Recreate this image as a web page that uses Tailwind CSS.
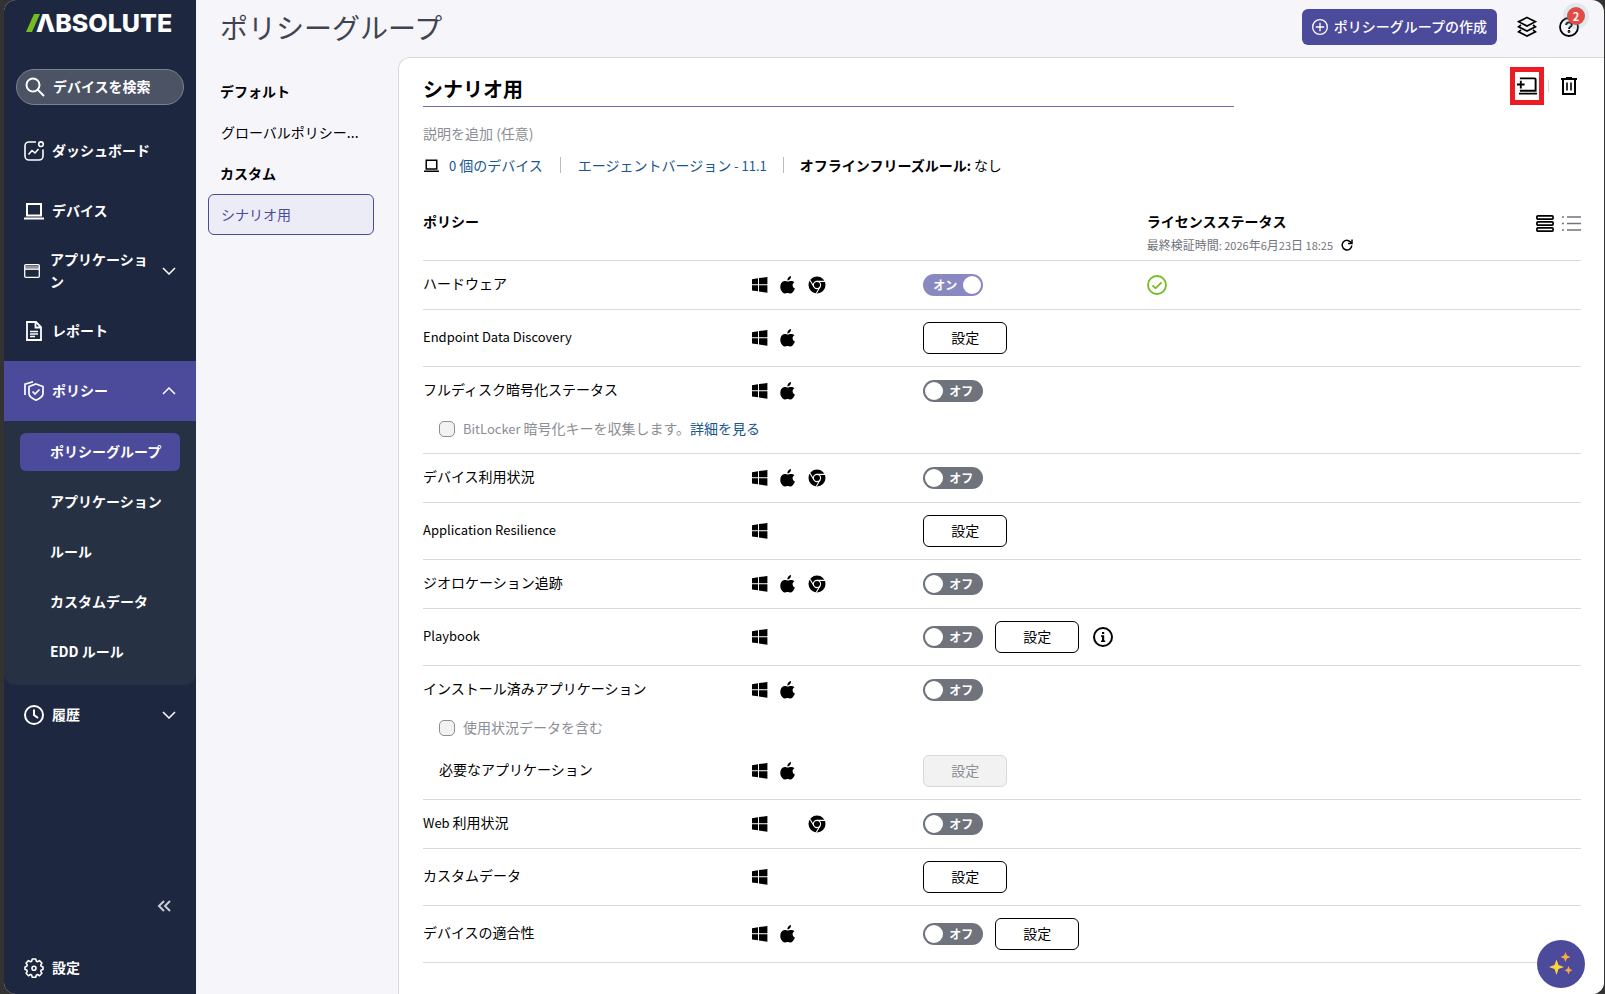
<!DOCTYPE html>
<html lang="ja">
<head>
  <meta charset="UTF-8" />
  <meta name="viewport" content="width=device-width, initial-scale=1.0"/>
  <title>ポリシーグループ</title>
  <script src="https://cdn.jsdelivr.net/npm/@tailwindcss/browser@4"></script>
</head>
<body class="bg-[#333333] font-['Noto_Sans_CJK_JP',sans-serif] text-sm text-black">
  <svg class="hidden">
    <symbol id="windows" viewBox="0 0 16 16"><path fill="currentColor" d="M0 2.2 6 1.3V7.2H0zM7 1.1 15.4 0V7.2H7zM0 8.2h6v6.1L0 13.4zM7 8.2h8.4v7.5L7 14.5z"/></symbol>
    <symbol id="apple" viewBox="0 0 16 18"><path fill="currentColor" d="M11 0c.2 1.200-.3 2.300-.9 3.100-.7.8-1.700 1.400-2.700 1.300-.2-1.100.3-2.200.9-3C9 .6 10.100.1 11 0zM14.500 6.300c-1.200.7-1.900 1.700-1.900 3 0 1.500.9 2.700 2.300 3.200-.3 1-.8 1.900-1.400 2.800-.8 1.200-1.600 2.300-2.900 2.300-1.200 0-1.600-.7-3-.7s-1.900.7-3 .7c-1.200 0-2.100-1.200-2.900-2.300C-.1 12.700-.1 9 1.300 7c.9-1.400 2.200-2.100 3.500-2.100 1.200 0 2 .7 3 .7s1.700-.8 3.200-.7c1.300 0 2.600.5 3.500 1.400z"/></symbol>
    <symbol id="chrome" viewBox="0 0 18 18">
      <circle cx="9" cy="9" r="8.500" fill="currentColor"/>
      <circle cx="9" cy="9" r="3.600" fill="none" stroke="#fff" stroke-width="1.100"/>
      <path fill="none" stroke="#fff" stroke-width="1.100" d="M9 5.400h8M5.900 10.800 2 4.200M12.100 10.800 8.200 17.500"/>
    </symbol>
    <symbol id="laptop" viewBox="0 0 20 20"><path fill="none" stroke="currentColor" stroke-width="2" d="M3 3h14v11.500H3zM0 17.500h20"/></symbol>
    <symbol id="down" viewBox="0 0 14 8"><path fill="none" stroke="currentColor" stroke-width="1.500" d="m1 1 6 6 6-6"/></symbol>
    <symbol id="up" viewBox="0 0 14 8"><path fill="none" stroke="currentColor" stroke-width="1.500" d="m1 7 6-6 6 6"/></symbol>
  </svg>

  <div class="ml-1 mr-px flex h-screen overflow-hidden rounded-xl bg-[#f5f5fa]">
    <aside class="flex w-48 shrink-0 flex-col bg-[#1e2740] font-bold text-white">
      <a href="#" class="flex h-11 items-center pt-0.5 pl-[22px] font-['Inter',sans-serif] text-[25px]/7 font-extrabold">
        <svg class="h-[18px] w-3.5" viewBox="0 0 14 18"><path fill="#76bc21" d="M0 18 8 0h6L6 18z"/></svg>
        <span class="-ml-1">ΛBSOLUTE</span>
      </a>
      <label class="mx-3 mt-[25px] flex h-9 items-center gap-2 rounded-full border border-[#7a8190] bg-[#4b5365] px-2">
        <svg class="size-5 shrink-0" viewBox="0 0 20 20" fill="none" stroke="currentColor" stroke-width="2"><circle cx="8" cy="8" r="6.500"/><path d="m12.500 12.500 6.500 6.500"/></svg>
        <input type="text" aria-label="デバイスを検索" placeholder="デバイスを検索" class="w-full min-w-0 bg-transparent pb-0.5 outline-none placeholder:text-white" />
      </label>
      <nav class="mt-4 flex flex-col">
        <a href="#" class="flex h-15 items-center gap-2 px-5">
          <svg class="size-5" viewBox="0 0 20 20" fill="none" stroke="currentColor" stroke-width="1.600"><path d="M12 1H5a4 4 0 0 0-4 4v10a4 4 0 0 0 4 4h10a4 4 0 0 0 4-4V8.500M4.500 13.500l3.500-4 3 2.500 3.500-4"/><circle cx="17" cy="3.200" r="2.300"/></svg>
          <span class="pb-0.5">ダッシュボード</span>
        </a>
        <a href="#" class="flex h-15 items-center gap-2 px-5">
          <svg class="size-5"><use href="#laptop"/></svg>
          <span class="pb-0.5">デバイス</span>
        </a>
        <a href="#" class="flex h-15 items-center px-5 leading-[22px]">
          <svg class="mr-2.5 h-3.5 w-4 shrink-0" viewBox="0 0 16 14" fill="none" stroke="currentColor" stroke-width="1.300"><rect x=".7" y=".7" width="14.600" height="12.600" rx="1"/><path d="M1 5.200h14" /><path opacity=".5" d="M1 3.300h14" stroke-width="3"/></svg>
          <span class="w-25 pb-0.5">アプリケーション</span>
          <svg class="ml-auto h-2 w-3.5 shrink-0"><use href="#down"/></svg>
        </a>
        <a href="#" class="flex h-15 items-center gap-2 px-5">
          <svg class="size-5" viewBox="0 0 20 20" fill="none" stroke="currentColor" stroke-width="1.800"><path d="M3 1h9l5 5v13H3zM11.500 1v5.500H17"/><path stroke-width="1.500" d="M6 10.500h8M6 13h8M6 15.500h5"/></svg>
          <span class="pb-0.5">レポート</span>
        </a>
        <a href="#" class="flex h-15 items-center gap-2 bg-[#4c4a9b] px-5">
          <svg class="size-5" viewBox="0 0 20 20" fill="none" stroke="currentColor" stroke-width="1.700"><path d="m12 3 7 2.500v7c0 3.200-3.500 5.200-7 6.700-3.500-1.500-7-3.500-7-6.700v-7zM9 0.800 1 3.200V14"/><path d="m8.500 10.500 2.500 2.500 4.500-4.500"/></svg>
          <span class="pb-0.5">ポリシー</span>
          <svg class="ml-auto h-2 w-3.5"><use href="#up"/></svg>
        </a>
        <div class="flex flex-col gap-3 rounded-b-xl bg-[#273144] px-4 pt-3 pb-3.5">
          <a href="#" class="flex h-[38px] items-center rounded-md bg-[#4c4a9b] pb-0.5 pl-[30px]">ポリシーグループ</a>
          <a href="#" class="flex h-[38px] items-center pb-0.5 pl-[30px]">アプリケーション</a>
          <a href="#" class="flex h-[38px] items-center pb-0.5 pl-[30px]">ルール</a>
          <a href="#" class="flex h-[38px] items-center pb-0.5 pl-[30px]">カスタムデータ</a>
          <a href="#" class="flex h-[38px] items-center pb-0.5 pl-[30px]">EDD ルール</a>
        </div>
        <a href="#" class="flex h-15 items-center gap-2 px-5">
          <svg class="size-5" viewBox="0 0 20 20" fill="none" stroke="currentColor" stroke-width="2"><circle cx="10" cy="10" r="9"/><path d="M10 4.500V10l4 3"/></svg>
          <span class="pb-0.5">履歴</span>
          <svg class="ml-auto h-2 w-3.5"><use href="#down"/></svg>
        </a>
      </nav>
      <button aria-label="メニューを閉じる" class="mt-auto mr-[25px] mb-[31px] self-end text-[#c9ccd2]">
        <svg class="h-3 w-3.5" viewBox="0 0 14 12" fill="none" stroke="currentColor" stroke-width="2"><path d="M7 1 2 6l5 5M13 1 8 6l5 5"/></svg>
      </button>
      <a href="#" class="mb-px flex h-[50px] items-center gap-2 px-5">
        <svg class="size-5" viewBox="0 0 20 20" fill="none" stroke="currentColor" stroke-width="1.600" stroke-linejoin="round"><path d="M8.300 1h3.400l.7 2.300 1 .4 2.100-1.100 2.400 2.400-1.200 2.100.5 1.200L19 9v2.500l-1.800.5-.5 1.200 1.200 2.100-2.400 2.400-2.100-1.200-1 .5-.7 2.200H8.300L7.600 17l-1-.5-2.100 1.200-2.400-2.400 1.200-2.100-.5-1.200L1 11.500V9l1.800-.7.5-1.200L2.100 5l2.400-2.400 2.100 1.100 1-.4z"/><circle cx="10" cy="10.200" r="2"/></svg>
        <span class="pb-0.5">設定</span>
      </a>
    </aside>

    <div class="flex min-w-0 flex-1 flex-col">
      <header class="flex h-[57px] shrink-0 items-center pr-[25px] pb-1 pl-6">
        <h1 class="text-[28px]/10 text-[#3f4450]">ポリシーグループ</h1>
        <button class="ml-auto flex h-9 items-center gap-1.5 rounded-md bg-[#4c4a9b] px-2.5 font-medium text-white">
          <svg class="size-4" viewBox="0 0 17 17" fill="none" stroke="currentColor" stroke-width="1.400"><circle cx="8.500" cy="8.500" r="7.800"/><path d="M8.500 4v9M4 8.500h9"/></svg>
          <span class="pb-0.5">ポリシーグループの作成</span>
        </button>
        <button aria-label="レイヤー" class="ml-5">
          <svg class="h-[22px] w-5" viewBox="0 0 20 22" fill="none" stroke="currentColor" stroke-width="1.600"><path d="m10 1.500 8.500 4.200L10 10 1.500 5.700zM4 9l-2.500 1.800L10 15l8.500-4.200L16 9M4 14l-2.500 1.800L10 20l8.500-4.200L16 14"/></svg>
        </button>
        <button aria-label="ヘルプ" class="relative ml-[22px]">
          <svg class="size-5" viewBox="0 0 20 20" fill="none" stroke="currentColor" stroke-width="1.800"><circle cx="10" cy="10" r="9"/><path d="M7.200 8c0-1.700 1.200-2.700 2.800-2.700s2.800 1 2.800 2.500c0 2-2.800 2-2.800 4.200"/><circle cx="10" cy="14.500" r=".5"/></svg>
          <span class="absolute -top-3.5 left-1 flex size-[26px] items-center justify-center rounded-full bg-[#76c5c5]/20"><span class="flex size-[18px] items-center justify-center rounded-full bg-[#e24c44] text-[11px]/4 font-bold text-white">2</span></span>
        </button>
      </header>

      <div class="flex min-h-0 flex-1">
        <nav class="w-[202px] shrink-0 px-3 pt-3.5 pr-6 leading-[38px]">
          <h2 class="h-[41px] border border-transparent px-[11px] font-bold">デフォルト</h2>
          <a href="#" class="block h-[41px] truncate border border-transparent px-3">グローバルポリシー...</a>
          <h2 class="h-[41px] border border-transparent px-[11px] font-bold">カスタム</h2>
          <a href="#" class="block h-[41px] rounded-md border border-[#4c4a9b] bg-[#ececf6] px-3 text-[#4c4a9b]">シナリオ用</a>
        </nav>

        <main class="min-w-0 flex-1 rounded-tl-xl border-t border-l border-[#d9d9dc] bg-white pt-[9px] pr-[23px] pl-6">
          <div class="flex items-start justify-between">
            <input type="text" aria-label="グループ名" value="シナリオ用" class="mt-[5px] h-[35px] w-[70%] border-b border-[#6f6db5] pb-0.5 text-xl font-bold outline-none" />
            <div class="flex items-center">
              <button aria-label="デバイスを追加" class="flex h-[38px] w-[34px] items-center justify-center border-[5px] border-[#ed1c24]">
                <svg class="h-5 w-[21px]" viewBox="0 0 22 20" fill="none" stroke="currentColor" stroke-width="2"><path d="M3 2h15.500a1 1 0 0 1 1 1v12H3M0 8.500h8M4 4.500v8M2 18h19"/></svg>
              </button>
              <span class="ml-1 h-3 w-px bg-[#d9d9dc]"></span>
              <button aria-label="削除" class="mr-1 ml-3">
                <svg class="h-[18px] w-4" viewBox="0 0 16 18" fill="none" stroke="currentColor" stroke-width="2"><path d="M0 2h16M5 1h6M2 2v15h12V2"/><path stroke-width="1.600" d="M6 5.500v8M10 5.500v8"/></svg>
              </button>
            </div>
          </div>
          <input type="text" aria-label="説明" placeholder="説明を追加 (任意)" class="mt-3.5 h-6 w-[70%] outline-none placeholder:text-[#8b8e94]" />
          <div class="mt-2.5 flex h-5 items-center">
            <svg class="mr-2.5 ml-px size-[15px]"><use href="#laptop"/></svg>
            <a href="#" class="text-[#17568f]"><span class="text-[13px]">0 </span>個のデバイス</a>
            <span class="mx-[17px] h-4 w-px bg-[#b9bcc2]"></span>
            <a href="#" class="text-[#17568f]">エージェントバージョン<span class="text-[13px]"> - 11.1</span></a>
            <span class="mx-4 h-4 w-px bg-[#b9bcc2]"></span>
            <span><b>オフラインフリーズルール<span class="text-[13px]">: </span></b>なし</span>
          </div>

          <table class="mt-[26px] w-full table-fixed border-separate border-spacing-0 text-left">
            <thead>
              <tr class="h-[60px] align-top">
                <th class="w-[28.4%] border-b border-[#d9d9dc] pt-2.5">ポリシー</th>
                <th class="w-[14.8%] border-b border-[#d9d9dc]"></th>
                <th class="w-[19.3%] border-b border-[#d9d9dc]"></th>
                <th class="border-b border-[#d9d9dc] pt-2.5">
                  <div class="flex justify-between">
                    <div>
                      <div>ライセンスステータス</div>
                      <div class="mt-1 flex items-center gap-2 text-xs/5 font-normal text-[#6f737b]">
                        <span>最終検証時間<span class="text-[11px]">: 2026</span>年<span class="text-[11px]">6</span>月<span class="text-[11px]">23</span>日<span class="text-[11px]"> 18:25</span></span>
                        <button aria-label="更新" class="text-black"><svg class="size-3" viewBox="0 0 12 12" fill="none" stroke="currentColor" stroke-width="1.500"><path d="M10.300 4A4.800 4.800 0 1 0 10.800 6.500M11 .5V4.500H7"/></svg></button>
                      </div>
                    </div>
                    <div class="flex items-start gap-2 pt-1">
                      <button aria-label="詳細表示"><svg class="h-[17px] w-[18px]" viewBox="0 0 18 17" fill="none" stroke="currentColor" stroke-width="1.700"><rect x=".9" y=".9" width="16.200" height="3.200" rx="1"/><rect x=".9" y="6.900" width="16.200" height="3.200" rx="1"/><rect x=".9" y="12.900" width="16.200" height="3.200" rx="1"/></svg></button>
                      <button aria-label="簡易表示" class="text-[#6f737b]"><svg class="h-[17px] w-[19px]" viewBox="0 0 19 17" fill="none" stroke="currentColor" stroke-width="1.300"><path d="M5 2h14M5 8.500h14M5 15h14M0 2h2M0 8.500h2M0 15h2"/></svg></button>
                    </div>
                  </div>
                </th>
              </tr>
            </thead>
            <tbody id="policies"></tbody>
          </table>
        </main>
      </div>
    </div>
  </div>

  <button aria-label="アシスタント" class="fixed right-5 bottom-1.5 flex size-12 items-center justify-center rounded-full bg-[#4c4a9b]">
    <svg class="size-6" viewBox="0 0 24 24"><path fill="#ffd43b" d="M7.500 7.500 9.500 13l5.500 2-5.500 2-2 6-2-6L0 15l5.500-2z"/><path fill="#ffa940" d="m16.500 0 1.400 3.600L21.500 5l-3.600 1.400L16.500 10l-1.400-3.600L11.500 5l3.600-1.400zM19.500 14l1.200 3 2.800 1.200-2.800 1.200-1.200 3-1.200-3-2.800-1.200 2.800-1.200z"/></svg>
  </button>

  <script>
    const policies = [
      { name: "ハードウェア", os: "wac", toggle: "on", licensed: true },
      { name: "Endpoint Data Discovery", os: "wa", button: true },
      { name: "フルディスク暗号化ステータス", os: "wa", toggle: "off", option: "BitLocker 暗号化キーを収集します。", link: "詳細を見る" },
      { name: "デバイス利用状況", os: "wac", toggle: "off" },
      { name: "Application Resilience", os: "w", button: true },
      { name: "ジオロケーション追跡", os: "wac", toggle: "off" },
      { name: "Playbook", os: "w", toggle: "off", button: true, info: true },
      { name: "インストール済みアプリケーション", os: "wa", toggle: "off", option: "使用状況データを含む", child: "必要なアプリケーション" },
      { name: "Web 利用状況", os: "wc", toggle: "off" },
      { name: "カスタムデータ", os: "w", button: true },
      { name: "デバイスの適合性", os: "wa", toggle: "off", button: true }
    ];

    const line = "border-b border-[#d9d9dc]";

    // Latin letters of the CJK font look large next to kana
    const latin = (text) => text.replace(/[A-Za-z][A-Za-z ]*/g, '<span class="text-[13px]">$&</span>');

    const osIcons = (os) => `
      <div class="flex items-center gap-3">
        <svg class="size-4 ${os.includes("w") ? "" : "invisible"}"><use href="#windows"/></svg>
        <svg class="h-[18px] w-4 ${os.includes("a") ? "" : "invisible"}"><use href="#apple"/></svg>
        <svg class="size-[18px] ${os.includes("c") ? "" : "invisible"}"><use href="#chrome"/></svg>
      </div>`;

    function toggle(state, name) {
      const on = state === "on";
      const knob = `<input type="checkbox" role="switch" aria-label="${name}" ${on ? "checked" : ""} class="size-[18px] appearance-none rounded-full bg-white" />`;
      return on
        ? `<label class="flex h-[22px] w-15 items-center justify-between rounded-full bg-[#8a88c0] pr-0.5 pl-2.5 text-xs font-bold text-white">オン${knob}</label>`
        : `<label class="flex h-[22px] w-15 items-center justify-between rounded-full bg-[#6f737b] pr-2.5 pl-0.5 text-xs font-bold text-white">${knob}オフ</label>`;
    }

    const infoIcon = `<button aria-label="情報" class="ml-0.5"><svg class="size-5" viewBox="0 0 20 20"><circle cx="10" cy="10" r="9" fill="none" stroke="currentColor" stroke-width="2"/><path fill="currentColor" d="M9 5h2.200v2H9zM8 8.300h3.200v5.200h1V15H8v-1.500h1V9.800H8z"/></svg></button>`;
    const checkIcon = `<svg class="size-5" viewBox="0 0 20 20" fill="none" stroke="#76bc21" stroke-width="1.800"><circle cx="10" cy="10" r="9"/><path d="m5.500 10.300 3 3 6-6"/></svg>`;

    document.getElementById("policies").innerHTML = policies.map((p, i) => {
      const border = p.option ? "" : line;
      const rowHeight = p.button ? "h-[57px]" : p.option ? "h-12" : "h-[49px]";
      let html = `
        <tr class="${rowHeight}">
          <td class="pb-1 ${border}">${latin(p.name)}</td>
          <td class="${border}">${osIcons(p.os)}</td>
          <td class="${border}"><div class="flex items-center gap-3">
            ${p.toggle ? toggle(p.toggle, p.name) : ""}
            ${p.button ? `<button class="h-8 w-21 rounded-md border border-black pb-0.5">設定</button>` : ""}
            ${p.info ? infoIcon : ""}
          </div></td>
          <td class="${border}">${p.licensed ? checkIcon : ""}</td>
        </tr>`;
      if (p.option) {
        html += `
        <tr class="${p.child ? "h-7" : "h-[39px]"} align-top">
          <td colspan="4" class="pl-4 ${p.child ? "" : line}"><div class="flex h-7 items-center text-[#8b8e94]">
            <input type="checkbox" id="option${i}" disabled class="mr-2 size-4 appearance-none rounded-[5px] border border-[#8b8e94] bg-[#f2f2f2]" />
            <label for="option${i}" class="pb-0.5">${latin(p.option)}</label>
            ${p.link ? `<a href="#" class="pb-0.5 text-[#17568f]">${p.link}</a>` : ""}
          </div></td>
        </tr>`;
      }
      if (p.child) {
        html += `
        <tr class="h-[58px]">
          <td class="pb-1 pl-4 ${line}">${p.child}</td>
          <td class="${line}">${osIcons("wa")}</td>
          <td class="${line}"><button disabled class="h-8 w-21 rounded-md border border-[#d9d9dc] bg-[#f2f2f2] pb-0.5 text-[#8b8e94]">設定</button></td>
          <td class="${line}"></td>
        </tr>`;
      }
      return html;
    }).join("");
  </script>
</body>
</html>
